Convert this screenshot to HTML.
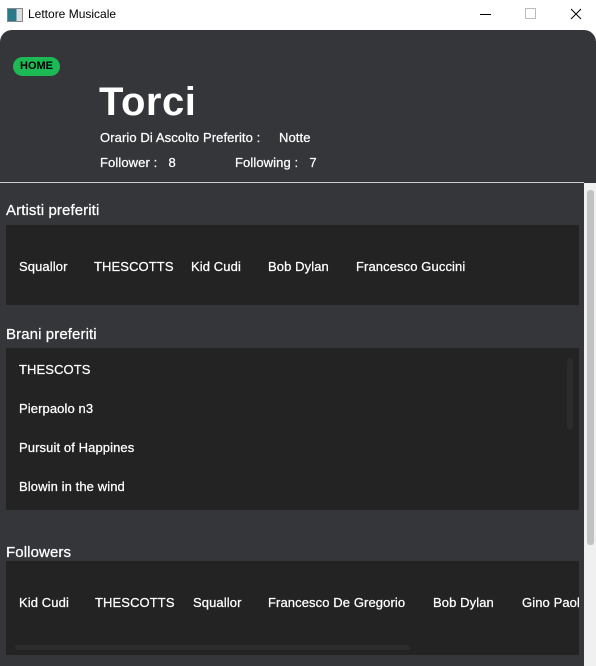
<!DOCTYPE html><html><head><style>
body{margin:0;width:596px;height:666px;overflow:hidden;background:#fff;font-family:"Liberation Sans",sans-serif;position:relative}
.a{position:absolute}
.t{color:#fff;font-size:13px;white-space:nowrap;-webkit-text-stroke:0.25px #fff;letter-spacing:0.1px}
.p{position:absolute;background:#232323;left:6px;width:573px}
</style></head><body>
<div class="a" style="left:7px;top:8px;width:14px;height:12px;border:1px solid #888;background:linear-gradient(90deg,#2a7a8a 60%,#ddd 60%)"></div>
<div class="a" style="left:28px;top:7px;font-size:12px;color:#000">Lettore Musicale</div>
<div class="a" style="left:480px;top:14px;width:11px;height:1px;background:#000"></div>
<div class="a" style="left:525px;top:8px;width:9px;height:9px;border:1px solid #bbb"></div>
<svg class="a" style="left:570px;top:8px" width="12" height="12"><path d="M1 1L11 11M11 1L1 11" stroke="#000" stroke-width="1"/></svg>
<div class="a" style="left:0;top:30px;width:596px;height:636px;background:#35363a;border-radius:12px 12px 0 0"></div>
<div class="a" style="left:0;top:182px;width:584px;height:1px;background:#ccc"></div>
<div class="a" style="left:13px;top:57px;width:47px;height:19px;border-radius:10px;background:#1db954;font-size:11px;font-weight:bold;text-align:center;line-height:19px;color:#000">HOME</div>
<div class="a" style="left:99px;top:80px;font-size:40px;font-weight:bold;color:#fff;letter-spacing:0.5px">Torci</div>
<div class="a t" style="left:100px;top:130px">Orario Di Ascolto Preferito :&nbsp;&nbsp;&nbsp; &nbsp;Notte</div>
<div class="a t" style="left:100px;top:155px">Follower :&nbsp;&nbsp; 8</div>
<div class="a t" style="left:235px;top:155px">Following :&nbsp;&nbsp; 7</div>
<div class="a" style="left:584px;top:183px;width:12px;height:483px;background:#f0f0f0"></div>
<div class="a" style="left:587px;top:190px;width:7px;height:355px;border-radius:3px;background:#c2c2c2"></div>
<div class="a t" style="left:6px;top:202px;font-size:15px">Artisti preferiti</div>
<div class="p" style="top:225px;height:80px"></div>
<div class="a t" style="left:19px;top:259px">Squallor</div>
<div class="a t" style="left:94px;top:259px">THESCOTTS</div>
<div class="a t" style="left:191px;top:259px">Kid Cudi</div>
<div class="a t" style="left:268px;top:259px">Bob Dylan</div>
<div class="a t" style="left:356px;top:259px">Francesco Guccini</div>
<div class="a t" style="left:6px;top:326px;font-size:15px">Brani preferiti</div>
<div class="p" style="top:348px;height:162px"></div>
<div class="a" style="left:567px;top:358px;width:6px;height:72px;border-radius:3px;background:#2c2c2c"></div>
<div class="a t" style="left:19px;top:362px">THESCOTS</div>
<div class="a t" style="left:19px;top:401px">Pierpaolo n3</div>
<div class="a t" style="left:19px;top:440px">Pursuit of Happines</div>
<div class="a t" style="left:19px;top:479px">Blowin in the wind</div>
<div class="a t" style="left:6px;top:544px;font-size:15px">Followers</div>
<div class="p" style="top:561px;height:94px;overflow:hidden">
<div class="a t" style="left:13px;top:34px">Kid Cudi</div>
<div class="a t" style="left:89px;top:34px">THESCOTTS</div>
<div class="a t" style="left:187px;top:34px">Squallor</div>
<div class="a t" style="left:262px;top:34px">Francesco De Gregorio</div>
<div class="a t" style="left:427px;top:34px">Bob Dylan</div>
<div class="a t" style="left:516px;top:34px">Gino Paoli</div>
<div class="a" style="left:9px;top:84px;width:395px;height:5px;border-radius:3px;background:#2c2c2c"></div>
</div>
</body></html>
